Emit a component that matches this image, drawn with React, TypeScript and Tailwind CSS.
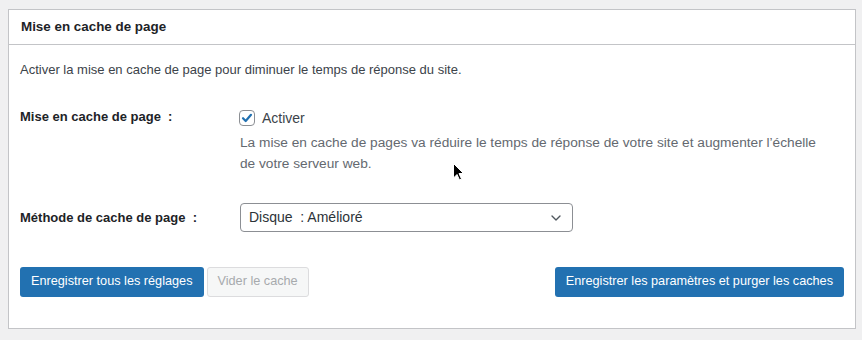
import { ChevronDown } from 'lucide-react'

const font = { fontFamily: '"Liberation Sans", Arial, sans-serif' }

export default function App() {
  return (
    <div className="relative h-[340px] w-[862px] bg-[#f0f0f1] pt-[9px] pl-2" style={font}>
      <div className="w-[848px] h-[320px] border border-[#c3c4c7] bg-white">
        {/* panel header */}
        <div className="flex h-[35px] items-center border-b border-[#c3c4c7] px-[12px]">
          <h2 className="text-[13.4px] font-semibold text-[#1d2327]">Mise en cache de page</h2>
        </div>

        <div className="px-[11px]">
          <p className="mt-[15px] text-[13px] leading-5 text-[#3c434a]">
            Activer la mise en cache de page pour diminuer le temps de réponse du site.
          </p>

          {/* page cache row */}
          <div className="mt-[26px] flex">
            <div className="w-[220px] pt-[1px] text-[13px] leading-5 font-semibold text-[#1d2327]">
              Mise en cache de page &nbsp;:
            </div>
            <div>
              <label className="-ml-px flex items-center gap-[7px] pt-[2px]">
                <span className="flex h-4 w-4 items-center justify-center rounded-[4px] border border-[#8c8f94] bg-white">
                  <svg width="12" height="12" viewBox="0 0 12 12">
                    <path d="M2 6.2 L4.7 9 L10 2.8" fill="none" stroke="#2271b1" strokeWidth="2.2" strokeLinecap="round" strokeLinejoin="round" />
                  </svg>
                </span>
                <span className="text-[14px] leading-5 text-[#3c434a]">Activer</span>
              </label>
              <p className="mt-[4px] w-[586px] text-[13.7px] leading-[21px] text-[#646970]">
                La mise en cache de pages va réduire le temps de réponse de votre site et augmenter l’échelle de votre serveur web.
              </p>
            </div>
          </div>

          {/* method row */}
          <div className="mt-[29px] flex items-center">
            <div className="w-[220px] text-[13px] font-semibold text-[#1d2327]">
              Méthode de cache de page &nbsp;:
            </div>
            <div className="flex h-[29px] w-[333px] items-center justify-between rounded-[4px] border border-[#8c8f94] pl-[8px] pr-[8px] text-[14px] text-[#2c3338]">
              <span>Disque &nbsp;: Amélioré</span>
              <ChevronDown size={16} strokeWidth={2} className="text-[#50575e]" />
            </div>
          </div>

          {/* actions */}
          <div className="mt-[35px] flex items-center">
            <button className="h-[30px] rounded-[3px] bg-[#2271b1] px-[11px] text-[12.7px] text-white">
              Enregistrer tous les réglages
            </button>
            <button className="ml-[3px] h-[30px] rounded-[3px] border border-[#dcdcde] bg-[#f6f7f7] px-[10px] text-[12.7px] text-[#a7aaad]">
              Vider le cache
            </button>
            <button className="ml-auto h-[30px] rounded-[3px] bg-[#2271b1] px-[11px] text-[12.7px] text-white">
              Enregistrer les paramètres et purger les caches
            </button>
          </div>
        </div>
      </div>

      {/* mouse pointer */}
      <svg className="absolute left-[453px] top-[163px]" width="12" height="19" viewBox="0 0 12 19">
        <path d="M0.5 0.5 L0.5 15 L4 11.5 L6.5 17 L8.5 16 L6 10.5 L10.5 10.5 Z" fill="#000" stroke="#fff" strokeWidth="1" />
      </svg>
    </div>
  )
}
